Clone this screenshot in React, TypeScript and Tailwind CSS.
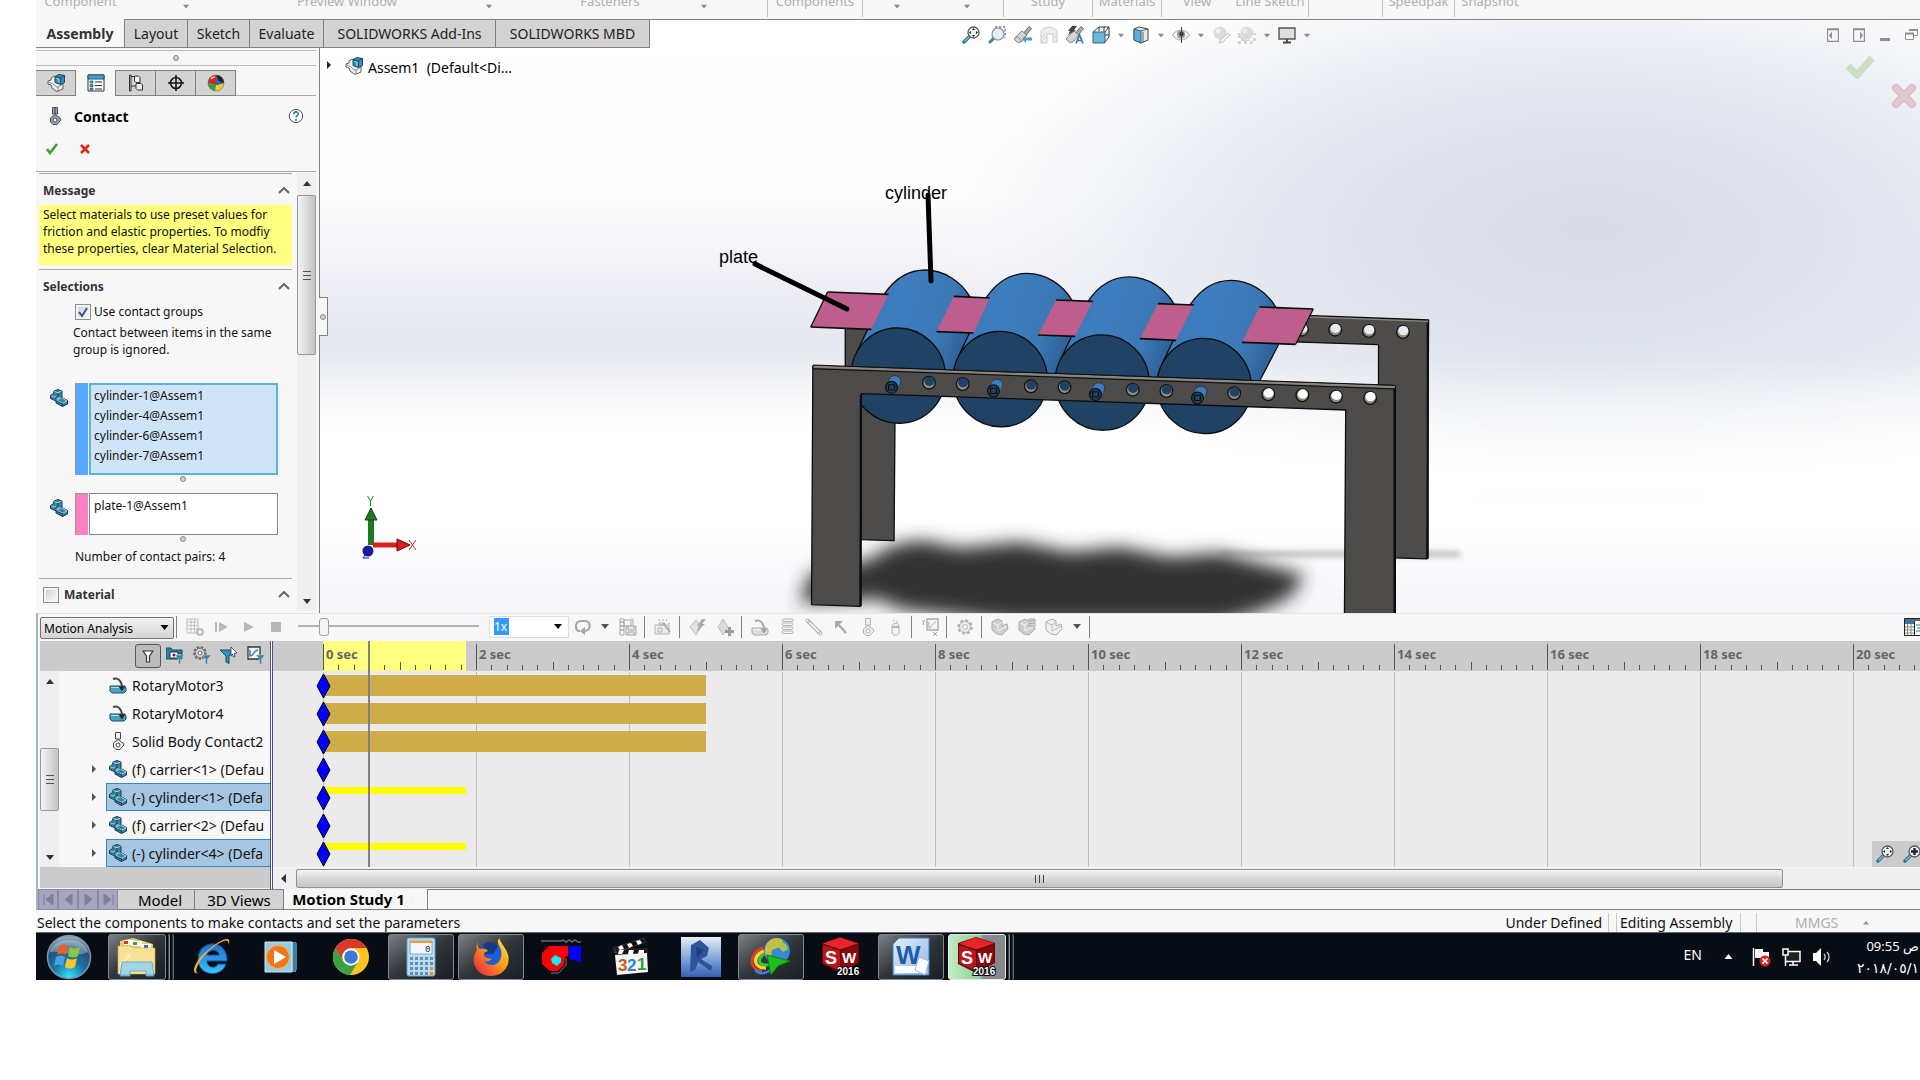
import type { ReactNode } from "react";
import clsx from "clsx";

function Svg({
  size = 18,
  className,
  children,
}: {
  size?: number;
  className?: string;
  children: ReactNode;
}) {
  return (
    <svg
      width={size}
      height={size}
      viewBox="0 0 18 18"
      fill="none"
      className={clsx("shrink-0", className)}
      aria-hidden="true"
    >
      {children}
    </svg>
  );
}

function Arrow({ className }: { className?: string }) {
  return (
    <svg width="8" height="5" viewBox="0 0 8 5" className={clsx("shrink-0", className)}>
      <path d="M0 0h8L4 5z" fill="currentColor" />
    </svg>
  );
}

function Dot() {
  return (
    <span className="block size-[6px] shrink-0 rounded-full border border-[#8c8c8c] bg-[#d0d0d0]" />
  );
}

/* ---------- icons ---------- */

function AssemblyIcon() {
  return (
    <Svg>
      <path d="M7 2 4 4v2L1 7v3l3 1 1 3 5 3.500 6-2.500V9l-3-3z" fill="#eceeef" stroke="#5d6163" />
      <path d="M11 17V12M2 8l4 2 5 4M16 10l-5 3" stroke="#8d9193" />
      <path d="m8 2.500 4-2 5.500 1v7l-4 2L8 8.500z" fill="#3f8fb5" stroke="#124a66" />
      <path d="m8 2.500 5.500 1.500 4-2.500M13.500 4v6" stroke="#124a66" />
      <path d="m9.500 4.500 2.500.7v3.800" stroke="#a6dcf2" />
    </Svg>
  );
}

function PartIcon() {
  return (
    <Svg>
      <path
        d="M.5 6.500 3.500 4.500 4 2 8 .5l4 1.500v6.500l5.500 3v3.500l-5 2.500L6 14v-2L.5 9.500z"
        fill="#3c7f9e"
        stroke="#123f56"
      />
      <path d="m4.500 2.500 3.500 1.200L11.500 2M1.500 6.800l3 1.200 1.500-1M12 9l5 3-4.500 2.200L7 11.500" stroke="#a3d5e8" />
      <path d="M8 4v4l-3 2M12.500 14.500v3M6 12l6.500 3" stroke="#123f56" />
      <path d="m8 8 4 1-4 2.200L6 10z" fill="#7fbdd6" />
    </Svg>
  );
}

function MotorIcon({ muted }: { muted?: boolean }) {
  const body = muted ? "#dcdcdc" : "#4ba0c6";
  const line = muted ? "#aaaaaa" : "#174f6b";
  return (
    <Svg>
      <path d="M1 10h15l1 2v3l-2 2H3l-2-2z" fill={body} stroke={line} />
      <path d="M2 11.500h10" stroke={muted ? "#f4f4f4" : "#b5e0f2"} />
      <path d="M4 3c5-2 9 2 9 9" stroke={muted ? "#aaaaaa" : "#444444"} strokeWidth="2" />
      <path d="m9.500 10.500 3.500 5 3-5z" fill={muted ? "#a0a0a0" : "#222222"} />
    </Svg>
  );
}

function ContactIcon({ muted, steel }: { muted?: boolean; steel?: boolean }) {
  const line = muted ? "#b0b0b0" : "#4c4c4c";
  const fill = steel ? "#93a5bb" : "#eeeeee";
  return (
    <Svg>
      <path d="M6.500.5h5V7h-5z" fill={fill} stroke={line} />
      {steel && <path d="M9 1v6" stroke="#33404f" />}
      <path d="m9 7.500 5 3.500 1 2-2 2-2 2.500H7L4.500 15v-4z" fill={fill} stroke={line} />
      <circle cx="9" cy="13" r="2" fill="#fff" stroke={line} />
    </Svg>
  );
}

function PropertyIcon() {
  return (
    <Svg>
      <path d="M1 1h16v16H1z" fill="#fff" stroke="#333" />
      <path d="M1 1h16v4H1z" fill="#4ba0c6" stroke="#1a5877" />
      <path d="M3 7h3v2H3zM3 10.500h3v2H3zM3 14h3v2H3z" fill="#4ba0c6" stroke="#1a5877" strokeWidth=".7" />
      <path d="M8 8h7M8 11.500h7M8 15h7" stroke="#333" strokeWidth="1.200" />
    </Svg>
  );
}

function ConfigIcon() {
  return (
    <Svg>
      <path d="M2.500 1v16H4V1zM4 2.500h4M4 12h5" stroke="#333" />
      <path d="M7.500 2h4l1.500 1.500v5h-4L7.500 7zM9 9.500h5l1.500 1.500v5h-5L9 14.500z" fill="#f2f2f2" stroke="#333" />
    </Svg>
  );
}

function TargetIcon() {
  return (
    <Svg>
      <circle cx="9" cy="9" r="5.500" stroke="#1a1a1a" strokeWidth="1.600" />
      <path d="M9 1v16M1 9h16" stroke="#1a1a1a" strokeWidth="1.600" />
    </Svg>
  );
}

function AppearanceIcon() {
  return (
    <Svg>
      <circle cx="9" cy="9" r="8" fill="#f2d21f" />
      <path d="M9 1a8 8 0 0 0-8 8l8 2z" fill="#d3262b" />
      <path d="M1 9a8 8 0 0 0 7 8l1-6z" fill="#2fa04a" />
      <path d="M9 1a8 8 0 0 1 8 8l-8 2z" fill="#3a2622" />
      <path d="M9 1 17 9l-8 2z" fill="#2d62c4" />
      <path d="M9 1c5 0 8 4 8 8l-5-2z" fill="#2a1c18" />
      <path d="M4 5c1-2 3-2 4-2" stroke="#ffb8b0" strokeWidth="1.500" />
      <circle cx="9" cy="9" r="8" stroke="#666" strokeWidth=".6" />
    </Svg>
  );
}

function HelpIcon() {
  return (
    <Svg size={16}>
      <circle cx="9" cy="9" r="7.500" fill="#fff" stroke="#3a3a3a" />
      <path d="M6.500 7c0-3.500 5-3.500 5-.5 0 2-2.500 2-2.500 4.200" stroke="#2d7da3" strokeWidth="1.800" />
      <circle cx="9" cy="13.400" r="1.200" fill="#2d7da3" />
    </Svg>
  );
}

function ZoomFitIcon({ plus }: { plus?: boolean }) {
  return (
    <Svg>
      <path d="m2 16 6-6" stroke="#2c6d8e" strokeWidth="3.400" strokeLinecap="round" />
      <path d="m2.500 15.500 5-5" stroke="#7dbbd8" strokeWidth="1.400" />
      <circle cx="11.500" cy="6.500" r="5.500" fill="#e8eef1" stroke="#555" strokeWidth="1.300" />
      {plus ? (
        <path d="M11.500 3v7M8 6.500h7" stroke="#222" strokeWidth="2.400" />
      ) : (
        <path
          d="m11.500 2 1.500 2h-3zM11.500 11l1.500-2h-3zM7 6.500 9 5v3zM16 6.500 14 5v3z"
          fill="#222"
        />
      )}
    </Svg>
  );
}

function ZoomAreaIcon() {
  return (
    <Svg>
      <path d="M7 1h10v11" stroke="#444" strokeDasharray="2.500 1.500" />
      <path d="m2 16 5-5" stroke="#3f86a9" strokeWidth="3" strokeLinecap="round" />
      <circle cx="10" cy="8" r="6" fill="#e4edf4" stroke="#8d959a" strokeWidth="1.200" />
    </Svg>
  );
}

function PrevViewIcon() {
  return (
    <Svg>
      <path d="m15 .5 2.500 2-5.500 7-3-2z" fill="#aaa" stroke="#555" strokeWidth=".8" />
      <path d="m8 5 5 4-6 7c-3 1.500-6.500-1-6.500-4z" fill="#d4d4d4" stroke="#666" strokeWidth=".8" />
      <path d="M2 11c2 0 4 1 5 4" stroke="#777" strokeWidth=".8" />
      <path d="m8 13 4-4v2.500h6v3h-6V17z" fill="#4f9cc4" />
    </Svg>
  );
}

function SectionIcon() {
  return (
    <Svg>
      <path d="M1 5c3-5 13-5 16 0v11h-4V8H7v9H1z" fill="#eee" stroke="#ccc" />
      <path d="m1 12 5-5M1 16l6-6M13 13l4-4" stroke="#ccc" />
    </Svg>
  );
}

function AnnotationViewIcon() {
  return (
    <Svg>
      <path d="M6 0h5L8 4h2L2 9l2-4H2z" fill="#444" />
      <path d="m15 .5 2.500 2-5.500 7-3-2z" fill="#aaa" stroke="#555" strokeWidth=".8" />
      <path d="m8 5 5 4-6 7c-3 1.500-6.500-1-6.500-4z" fill="#d4d4d4" stroke="#666" strokeWidth=".8" />
      <path d="m10 17.500 3.500-8.500L17 17.500M11.500 14.500h4" stroke="#2f7fa8" strokeWidth="1.700" />
    </Svg>
  );
}

function ViewCubeIcon() {
  return (
    <Svg>
      <path d="M1 6 7 1h10v10l-4 5M12 1v10M7 1v4M13 6l4-5M8 9h9" stroke="#333" />
      <path d="M1 6h12v11H1z" fill="#6db6d6" stroke="#2b6684" />
    </Svg>
  );
}

function DisplayStyleIcon() {
  return (
    <Svg>
      <path d="m2 3 5-2 9 2v11l-7 3-7-3z" fill="#e8eaeb" stroke="#444" />
      <path d="M2 3 9 5v12l-7-3z" fill="#5fb0d4" stroke="#2b6684" />
      <path d="m9 5 7-2M11 6v10" stroke="#444" strokeWidth=".8" />
    </Svg>
  );
}

function EyeIcon() {
  return (
    <Svg>
      <path d="M.5 9C4 2.500 14 2.500 17.500 9 14 15.500 4 15.500.5 9z" fill="#f0f0f0" stroke="#a8a8a8" />
      <circle cx="9" cy="8.500" r="4" fill="#9a9a9a" />
      <circle cx="9.500" cy="8" r="2.200" fill="#333" />
      <path d="M9.500 1v16" stroke="#444" />
    </Svg>
  );
}

function EditAppearanceIcon() {
  return (
    <Svg>
      <circle cx="8" cy="7" r="6.500" fill="#dcdcdc" />
      <circle cx="6" cy="5" r="2.500" fill="#efefef" />
      <path d="m16 7 2 2-7 7-4 1 1-3z" fill="#f2f2f2" stroke="#c0c0c0" />
    </Svg>
  );
}

function SceneIcon() {
  return (
    <Svg>
      <path d="M0 7h18v11H0z" fill="#d2d2d2" />
      <path d="M0 12h3v3H0zM3 15h3v3H3zM9 15h3v3H9zM12 12h3v3h-3zM15 15h3v3h-3zM15 9h3v3h-3z" fill="#fff" />
      <circle cx="9" cy="7" r="6.500" fill="#dadada" stroke="#eee" />
      <circle cx="7" cy="5" r="2.500" fill="#eee" />
    </Svg>
  );
}

function MonitorIcon() {
  return (
    <Svg>
      <path d="M1 2h16v11H1z" fill="#dedede" stroke="#555" strokeWidth="1.400" />
      <path d="M9 13v3M5 16.500h8" stroke="#444" strokeWidth="1.800" />
    </Svg>
  );
}

function CalcGridIcon() {
  return (
    <Svg>
      <path d="M1 1h11v14H1zM1 4h11M1 7.500h11M1 11h11M5 1v14M8.500 1v14" stroke="#c0c0c0" />
      <circle cx="14" cy="14" r="3" fill="#eee" stroke="#b0b0b0" strokeWidth="1.600" />
    </Svg>
  );
}

function LoopIcon() {
  return (
    <Svg>
      <path d="M6 13H4c-3-2-3-9 2-10h5c5 0 6 6 3 9l-3 1" stroke="#a8a8a8" strokeWidth="2" />
      <path d="m6 13 5-4v8z" fill="#a8a8a8" />
    </Svg>
  );
}

function FilmSaveIcon() {
  return (
    <Svg>
      <path d="M1 1h4v16H1zM5 2h7v6H5zM12 1h2v7" stroke="#aaa" />
      <path d="M1 4h4M1 8h4M1 12h4" stroke="#aaa" strokeWidth="1.500" />
      <path d="M7 8h10v9H7z" fill="#e8e8e8" stroke="#aaa" />
      <path d="M9 8v4h6V8M9 17v-3h6v3" stroke="#aaa" />
    </Svg>
  );
}

function WizardIcon() {
  return (
    <Svg>
      <path d="M1 7h14v9H1z" fill="#ececec" stroke="#b5b5b5" />
      <path d="M5 5h6v2H5zM4 10h4v4H4z" stroke="#b0b0b0" />
      <path d="m9 5 7 9" stroke="#aaa" strokeWidth="1.800" />
      <path d="m5 1 1 2M9 1v2M13 1l-1 2M16 5l-2 1" stroke="#aaa" />
    </Svg>
  );
}

function AutoKeyIcon() {
  return (
    <Svg>
      <path d="m7 2 5 7-5 8-6-8z" fill="#e2e2e2" stroke="#bcbcbc" />
      <path d="M13 1h4l-4 5h3l-9 8 3-6H8z" fill="#a9a9a9" />
    </Svg>
  );
}

function AddKeyIcon() {
  return (
    <Svg>
      <path d="m7 1 5 8-5 8-5-8z" fill="#dcdcdc" stroke="#bcbcbc" />
      <path d="M13.500 9v9M9 13.500h9" stroke="#9c9c9c" strokeWidth="3" />
    </Svg>
  );
}

function SpringIcon() {
  return (
    <Svg>
      {[1, 5, 9, 13].map((y) => (
        <rect key={y} x="4" y={y} width="11" height="2.500" rx="1.200" fill="#f4f4f4" stroke="#b4b4b4" />
      ))}
    </Svg>
  );
}

function DamperIcon() {
  return (
    <Svg>
      <path d="m3 3 12 12" stroke="#adadad" strokeWidth="4" strokeLinecap="round" />
      <path d="m4 4 11 11" stroke="#f2f2f2" strokeWidth="2" />
      <circle cx="2.500" cy="2.500" r="1.500" fill="#fff" stroke="#aaa" />
      <circle cx="15.500" cy="15.500" r="1.500" fill="#fff" stroke="#aaa" />
    </Svg>
  );
}

function ForceIcon() {
  return (
    <Svg>
      <path d="m5 5 9 10" stroke="#a9a9a9" strokeWidth="2.400" />
      <path d="M3 3h8l-8 8z" fill="#a9a9a9" />
    </Svg>
  );
}

function GravityIcon() {
  return (
    <Svg>
      <path d="M8 1v3M11 2v3" stroke="#c8c8c8" />
      <path d="M6 7c2-2 6-2 7 0v8c-1 3-6 3-7 0z" fill="#f2f2f2" stroke="#b5b5b5" />
      <path d="M6 8h7v2H6z" fill="#b5b5b5" />
    </Svg>
  );
}

function PlotIcon() {
  return (
    <Svg>
      <path d="M6 1h11v11H6z" fill="#f4f4f4" stroke="#aaa" strokeWidth="1.300" />
      <path d="M8 4v6c3 0 3-5 7-6M1 2l1.500 2L4 2M2.500 4v3M12 14l4 4M16 14l-4 4" stroke="#aaa" />
    </Svg>
  );
}

function GearIcon() {
  return (
    <Svg>
      <circle cx="9" cy="9" r="6.500" stroke="#b2b2b2" strokeWidth="2.400" strokeDasharray="3 2" />
      <circle cx="9" cy="9" r="5.500" fill="#eee" stroke="#b2b2b2" />
      <circle cx="9" cy="9" r="2.500" fill="#fff" stroke="#b2b2b2" />
    </Svg>
  );
}

function SimIcon({ light, grid }: { light?: boolean; grid?: boolean }) {
  return (
    <Svg>
      <path
        d="m1 4 6-3 4 2v5l5-2 1 5-6 6-5-1-5-4z"
        fill={light ? "#efefef" : "#cfcfcf"}
        stroke="#ababab"
      />
      <path d="m2 5 5 2v6M7 7l4-3M7 13l9-5" stroke={light ? "#bbb" : "#f5f5f5"} />
      {grid && <path d="M11 1h6v7h-6zM13 1v7M15 1v7M11 3h6M11 5.500h6" fill="#fff" stroke="#aaa" />}
    </Svg>
  );
}

/* filter strip above the tree */
const funnel = "M9 9h9l-3.500 4v5h-2v-5z";

function FilterAnimatedIcon() {
  return (
    <Svg>
      <path d="M0 2h5l1 2h10v9H0z" fill="#2c7fa6" stroke="#174f6b" />
      <path d="M4 6h8v6H4zM12 8l3-1v5l-3-1" fill="#fff" stroke="#333" />
      <circle cx="8" cy="9" r="1.500" fill="#333" />
      <path d={funnel} fill="#2c86b0" stroke="#cbcbcb" strokeWidth=".6" />
    </Svg>
  );
}

function FilterDrivingIcon() {
  return (
    <Svg>
      <circle cx="7" cy="7" r="5.800" stroke="#666" strokeWidth="2" strokeDasharray="2.500 1.400" />
      <circle cx="7" cy="7" r="4.500" fill="#ddd" stroke="#777" />
      <circle cx="7" cy="7" r="2" fill="#fff" stroke="#666" />
      <path d={funnel} fill="#2c86b0" stroke="#cbcbcb" strokeWidth=".6" />
    </Svg>
  );
}

function FilterSelectedIcon() {
  return (
    <Svg>
      <path d="M0 4h14l-5 6v7.500L6 16v-6z" fill="#3291bd" stroke="#17506c" />
      <path d="m11 1 6 6-3 .5 1 3-1.500.5-1-3L11 10z" fill="#fff" stroke="#333" strokeWidth=".8" />
    </Svg>
  );
}

function FilterResultsIcon() {
  return (
    <Svg>
      <path d="M1 1h12v12H1z" fill="#f5f5f5" stroke="#333" strokeWidth="1.300" />
      <path d="M3 4v6c5 0 2-5 8-6" stroke="#2c7fa6" strokeWidth="1.400" />
      <path d={funnel} fill="#2c86b0" stroke="#cbcbcb" strokeWidth=".6" />
    </Svg>
  );
}

/* ---------- ribbon ---------- */

function RibbonLabel({ children, className }: { children: ReactNode; className: string }) {
  return (
    <div className={clsx("flex h-[17px] justify-center border-[#c0c0c0]", className)}>
      <span className="-mt-[9px] text-[13px] leading-[20px] whitespace-nowrap text-[#b0b0b0]">
        {children}
      </span>
    </div>
  );
}

function RibbonArrow({ className }: { className: string }) {
  return (
    <div className={clsx("flex h-[17px] items-start justify-center border-[#c0c0c0] pt-1", className)}>
      <Arrow className="w-[6px] text-[#888]" />
    </div>
  );
}

function Ribbon() {
  return (
    <div className="flex h-[19px] overflow-hidden bg-[#f7f7f7]">
      <RibbonLabel className="w-[89px]">Component</RibbonLabel>
      <RibbonArrow className="w-[121px]" />
      <RibbonLabel className="w-[202px]">Preview Window</RibbonLabel>
      <RibbonArrow className="w-[82px]" />
      <RibbonLabel className="w-[160px]">Fasteners</RibbonLabel>
      <RibbonArrow className="w-[28px]" />
      <div className="h-[17px] w-[50px] border-r border-[#c0c0c0]" />
      <RibbonLabel className="w-[95px] border-r">Components</RibbonLabel>
      <RibbonArrow className="w-[68px]" />
      <RibbonArrow className="w-[73px] border-r" />
      <RibbonLabel className="w-[89px] border-r">Study</RibbonLabel>
      <RibbonLabel className="w-[69px] border-r">Materials</RibbonLabel>
      <RibbonLabel className="w-[70px]">View</RibbonLabel>
      <RibbonLabel className="w-[77px] border-r">Line Sketch</RibbonLabel>
      <div className="h-[17px] w-[74px] border-r border-[#c0c0c0]" />
      <RibbonLabel className="w-[72px] border-r">Speedpak</RibbonLabel>
      <RibbonLabel className="w-[70px]">Snapshot</RibbonLabel>
    </div>
  );
}

const commandTabs = [
  { label: "Layout", width: "w-[63px]" },
  { label: "Sketch", width: "w-[62px]" },
  { label: "Evaluate", width: "w-[74px]" },
  { label: "SOLIDWORKS Add-Ins", width: "w-[172px]" },
  { label: "SOLIDWORKS MBD", width: "w-[154px]" },
];

function CommandTabs() {
  return (
    <div role="tablist" className="flex text-[14px] text-[#222]">
      <button
        role="tab"
        aria-selected="true"
        className="w-[89px] border-r border-b border-[#808080] bg-[#f7f7f7] font-bold text-[#333]"
      >
        Assembly
      </button>
      {commandTabs.map((tab) => (
        <button
          key={tab.label}
          role="tab"
          className={clsx(
            "border-t border-r border-b border-[#808080] bg-[#d3d3d3] whitespace-nowrap",
            tab.width
          )}
        >
          {tab.label}
        </button>
      ))}
    </div>
  );
}

function HudButton({ children, label }: { children: ReactNode; label: string }) {
  return (
    <button aria-label={label} className="flex w-[26px] items-center justify-center">
      {children}
    </button>
  );
}

function HudArrow() {
  return (
    <button aria-label="More" className="flex w-[14px] items-center justify-center text-[#888]">
      <Arrow className="w-[6px]" />
    </button>
  );
}

function HeadsUpToolbar() {
  return (
    <div className="flex h-[30px] w-[664px] shrink-0 items-center justify-center">
      <HudButton label="Zoom to Fit"><ZoomFitIcon /></HudButton>
      <HudButton label="Zoom to Area"><ZoomAreaIcon /></HudButton>
      <HudButton label="Previous View"><PrevViewIcon /></HudButton>
      <HudButton label="Section View"><SectionIcon /></HudButton>
      <HudButton label="Dynamic Annotation Views"><AnnotationViewIcon /></HudButton>
      <HudButton label="View Orientation"><ViewCubeIcon /></HudButton>
      <HudArrow />
      <HudButton label="Display Style"><DisplayStyleIcon /></HudButton>
      <HudArrow />
      <HudButton label="Hide/Show Items"><EyeIcon /></HudButton>
      <HudArrow />
      <HudButton label="Edit Appearance"><EditAppearanceIcon /></HudButton>
      <HudButton label="Apply Scene"><SceneIcon /></HudButton>
      <HudArrow />
      <HudButton label="View Settings"><MonitorIcon /></HudButton>
      <HudArrow />
    </div>
  );
}

function WindowButtons() {
  return (
    <div className="ml-auto flex items-center gap-[14px] pt-px pr-[2px] text-[#909090]">
      <button aria-label="Expand left pane">
        <svg width="12" height="14" fill="none">
          <path d="M.5 1.500h11v12H.5zM0 1h12" stroke="currentColor" strokeWidth="1.400" />
          <path d="m2 7.500 3-4v8z" fill="currentColor" />
        </svg>
      </button>
      <button aria-label="Expand right pane">
        <svg width="12" height="14" fill="none">
          <path d="M.5 1.500h11v12H.5zM0 1h12" stroke="currentColor" strokeWidth="1.400" />
          <path d="m10 7.500-3-4v8z" fill="currentColor" />
        </svg>
      </button>
      <button aria-label="Minimize">
        <svg width="12" height="14">
          <path d="M1 10h10v3H1z" fill="currentColor" />
        </svg>
      </button>
      <button aria-label="Restore">
        <svg width="13" height="14" fill="none">
          <path d="M4.500 3V1.500h8v6H9M.5 5.500h8v6h-8z" stroke="currentColor" />
          <path d="M4 1h9v2H4zM0 4.500h9v2H0z" fill="currentColor" />
        </svg>
      </button>
    </div>
  );
}

/* ---------- property manager ---------- */

const managerTabs = [
  { label: "FeatureManager", icon: <AssemblyIcon /> },
  { label: "PropertyManager", icon: <PropertyIcon />, active: true },
  { label: "ConfigurationManager", icon: <ConfigIcon /> },
  { label: "DimXpertManager", icon: <TargetIcon /> },
  { label: "DisplayManager", icon: <AppearanceIcon /> },
];

function Chevron() {
  return (
    <svg width="12" height="7" fill="none">
      <path d="m1 6 5-5 5 5" stroke="#666" strokeWidth="2" />
    </svg>
  );
}

function CheckBox({ id, checked }: { id: string; checked?: boolean }) {
  return (
    <span className="relative size-4 shrink-0">
      <input
        id={id}
        type="checkbox"
        defaultChecked={checked}
        className="peer block size-4 appearance-none border border-[#8e8f8f] bg-linear-to-br from-[#c6cbd3] to-white shadow-[inset_0_0_0_2px_#f4f4f4]"
      />
      <svg
        width="16"
        height="16"
        fill="none"
        className="pointer-events-none absolute inset-0 hidden peer-checked:block"
      >
        <path d="m4 8 3 4 5-8" stroke="#3b4f9b" strokeWidth="2" />
      </svg>
    </span>
  );
}

function SectionTitle({ children }: { children: ReactNode }) {
  return (
    <button className="flex h-8 w-full items-center justify-between border-t border-[#a9a9a9] pt-[2px] pr-[2px] pl-1 text-[12px] font-bold text-[#333]">
      <span>{children}</span>
      <Chevron />
    </button>
  );
}

function SelectionBox({
  label,
  items,
  focused,
}: {
  label: string;
  items: string[];
  focused?: boolean;
}) {
  return (
    <div className="flex gap-[7px] pl-[11px]">
      <div className="pt-[6px]">
        <PartIcon />
      </div>
      <div className="flex gap-px">
        <span
          className={clsx(
            "w-[13px] border-t border-l border-[#999]",
            focused ? "bg-[#57a8ff]" : "bg-[#ff80c0]"
          )}
        />
        <ul
          aria-label={label}
          className={clsx(
            "w-[189px] leading-5",
            focused
              ? "h-[92px] border-2 border-[#5cb1e3] bg-[#cfe4f7] pt-px pl-[3px]"
              : "h-[42px] border border-[#8088a0] bg-white pt-[2px] pl-1"
          )}
        >
          {items.map((item) => (
            <li key={item}>{item}</li>
          ))}
        </ul>
      </div>
    </div>
  );
}

function VScroll({ thumb, className }: { thumb: string; className: string }) {
  return (
    <div className={clsx("flex shrink-0 flex-col items-center bg-[#efefef]", className)}>
      <button aria-label="Scroll up" className="flex h-5 items-center">
        <Arrow className="rotate-180 text-[#333]" />
      </button>
      <div className="min-h-0 w-full flex-1">
        <div
          className={clsx(
            "flex w-full flex-col items-center justify-center gap-[3px] rounded-[2px] border border-[#979797] bg-linear-to-r from-[#f4f4f4] via-[#dcdcde] to-[#c4c4c7]",
            thumb
          )}
        >
          <i className="h-px w-2 bg-[#555]" />
          <i className="h-px w-2 bg-[#555]" />
          <i className="h-px w-2 bg-[#555]" />
        </div>
      </div>
      <button aria-label="Scroll down" className="flex h-5 items-center">
        <Arrow className="text-[#333]" />
      </button>
    </div>
  );
}

function PropertyManager() {
  return (
    <aside className="flex w-[283px] shrink-0 flex-col bg-[#f7f7f7] pr-[3px] text-[12px] leading-[17px] text-[#111]">
      <div className="mt-[2px] flex h-4 items-center justify-center border-y border-[#bcbcbc]">
        <Dot />
      </div>
      <div role="tablist" className="mt-1 flex h-[26px]">
        {managerTabs.map((tab) => (
          <button
            key={tab.label}
            role="tab"
            aria-label={tab.label}
            aria-selected={!!tab.active}
            className={clsx(
              "flex w-10 items-center justify-center border-r border-[#808080]",
              tab.active ? "bg-[#f7f7f7]" : "border-y bg-[#d3d3d3]"
            )}
          >
            {tab.icon}
          </button>
        ))}
        <div className="flex-1 border-b border-[#a9a9a9]" />
      </div>
      <div className="flex h-10 items-center pr-[12px] pl-[10px]">
        <ContactIcon steel />
        <h2 className="ml-[10px] flex-1 text-[14px] font-bold text-black">Contact</h2>
        <button aria-label="Help">
          <HelpIcon />
        </button>
      </div>
      <div className="flex h-9 items-start gap-[22px] border-b border-[#a9a9a9] pt-[7px] pl-[10px]">
        <button aria-label="OK">
          <svg width="12" height="12" fill="none">
            <path d="m1 6 3 4 7-9" stroke="#3fa127" strokeWidth="2.600" />
          </svg>
        </button>
        <button aria-label="Cancel">
          <svg width="10" height="12" fill="none">
            <path d="m1 2 8 8M9 2l-8 8" stroke="#dc2b0c" strokeWidth="2.600" />
          </svg>
        </button>
      </div>
      <div className="flex min-h-0 flex-1 pt-px">
        <div className="mr-[5px] ml-[3px] min-w-0 flex-1">
          <SectionTitle>Message</SectionTitle>
          <p className="h-15 bg-[#ffff80] px-1 pt-px whitespace-nowrap">
            Select materials to use preset values for
            <br />
            friction and elastic properties. To modfiy
            <br />
            these properties, clear Material Selection.
          </p>
          <div className="mt-1">
            <SectionTitle>Selections</SectionTitle>
          </div>
          <div className="flex items-center gap-[3px] pt-[2px] pl-[36px]">
            <CheckBox id="groups" checked />
            <label htmlFor="groups">Use contact groups</label>
          </div>
          <p className="h-[63px] pt-[4px] pl-[34px] whitespace-nowrap">
            Contact between items in the same
            <br />
            group is ignored.
          </p>
          <SelectionBox
            label="Group 1"
            focused
            items={["cylinder-1@Assem1", "cylinder-4@Assem1", "cylinder-6@Assem1", "cylinder-7@Assem1"]}
          />
          <div className="flex h-[18px] items-start pt-px pl-[141px]">
            <Dot />
          </div>
          <SelectionBox label="Group 2" items={["plate-1@Assem1"]} />
          <div className="flex h-[12px] items-start pt-px pl-[141px]">
            <Dot />
          </div>
          <p className="h-[31px] pt-px pl-[36px]">Number of contact pairs: 4</p>
          <div className="flex items-center border-t border-[#a9a9a9] pr-[2px] pl-1">
            <CheckBox id="material" />
            <label htmlFor="material" className="ml-[5px] flex-1 py-[7px] text-[12px] font-bold text-[#333]">
              Material
            </label>
            <Chevron />
          </div>
        </div>
        <VScroll className="mb-[2px] w-[19px]" thumb="mt-[2px] h-[160px]" />
      </div>
    </aside>
  );
}

/* ---------- graphics area ---------- */

const rollers = [0, 1, 2, 3];
const plateParts = [
  "113,366 258,373 217,478 73,471",
  "413,379 498,384 460,489 372,485",
  "656,390 743,394 701,499 613,495",
  "898,401 983,405 941,511 855,506",
  "1139,411 1267,417 1225,523 1098,517",
];
const frontHoles = [
  [354, 638, 1],
  [434, 642, 1],
  [596, 649, 1],
  [676, 652, 1],
  [838, 659, 1],
  [918, 663, 1],
  [1079, 670, 1],
  [1160, 673, 0],
  [1241, 676, 0],
  [1321, 680, 0],
  [1402, 684, 0],
];
const backHoles = [
  [1240, 479],
  [1319, 479],
  [1399, 483],
  [1480, 486],
];

function Hole({ x, y, fill }: { x: number; y: number; fill: string }) {
  return (
    <g>
      <ellipse cx={x} cy={y} rx="15" ry="19" fill="#8f8b84" stroke="#111" vectorEffect="non-scaling-stroke" />
      <ellipse cx={x + 1} cy={y - 4} rx="12" ry="14" fill={fill} stroke="none" />
    </g>
  );
}

function ConveyorModel() {
  return (
    <g
      transform="translate(460 151) scale(.4209 .3333)"
      stroke="#0c0c0c"
      strokeWidth="1.300"
      strokeLinejoin="round"
    >
      {/* back frame */}
      <g fill="#4d4c4a">
        <path d="M155 470h120l-4 642-79-3V600h-37z" vectorEffect="non-scaling-stroke" />
        <path
          d="M1200 434 1541 450l-4 717-75-3-40-500V524l-222-9z"
          vectorEffect="non-scaling-stroke"
        />
        <path d="m1240 440 300 14" stroke="#8d8983" strokeWidth="4" />
        <path d="M1539 458v708" strokeWidth="5" />
      </g>
      {backHoles.map(([x, y]) => (
        <Hole key={x} x={x} y={y} fill="#e9ebf3" />
      ))}

      {/* rollers */}
      {rollers.map((i) => (
        <g key={i} transform={`translate(${i * 242.3} ${i * 10.4})`}>
          <path
            d="M183 545 248 372C275 322 310 300 345 300c45 0 85 35 106 80 12 25 14 70 6 114l-44 107-20 40H230z"
            fill="url(#roller)"
            vectorEffect="non-scaling-stroke"
          />
          <ellipse
            cx="281"
            cy="617"
            rx="112"
            ry="143"
            fill="#204264"
            transform="rotate(-2 281 617)"
            vectorEffect="non-scaling-stroke"
          />
        </g>
      ))}

      {/* plate */}
      {plateParts.map((points) => {
        const [a, b, c, d] = points.split(" ");
        return (
          <g key={points}>
            <polygon points={points} fill="#be5e8d" stroke="none" />
            <path d={`M${a} ${b}M${c} ${d}`} strokeWidth="5" />
          </g>
        );
      })}
      <path d="M113 366 73 471M1267 417l-42 106" strokeWidth="3" />

      {/* front frame */}
      <path
        d="M78 588 1462 648V1345H1341l3-625L193 671l-3 638-115-5z"
        fill="#4c4b49"
        vectorEffect="non-scaling-stroke"
      />
      <path d="m80 590 1381 61" stroke="#8a857f" strokeWidth="7" />
      <path d="m78 585 1384 61M78 596l1384 61" strokeWidth="3" />
      <path d="M1460 655v690M192 675v634" strokeWidth="5" />
      {frontHoles.map(([x, y, solid]) => (
        <Hole key={x} x={x} y={y} fill={solid ? "#204264" : "#ffffff"} />
      ))}
      {rollers.map((i) => (
        <g key={i} transform={`translate(${i * 242.3} ${i * 10.6})`}>
          <ellipse cx="273" cy="633" rx="14" ry="16" fill="#3d7cbd" />
          <path d="m252 648 12-26 22 10-7 28z" fill="#3d7cbd" stroke="none" />
          <ellipse cx="265" cy="652" rx="14" ry="18" fill="#204264" strokeWidth="3" />
          <path d="M258 644h14v16h-14z" strokeWidth="3" fill="none" />
        </g>
      ))}
    </g>
  );
}

function GraphicsArea() {
  return (
    <svg
      className="absolute top-0 left-[284px] h-full w-[1600px]"
      viewBox="0 0 1600 594"
      preserveAspectRatio="xMinYMin slice"
      fontFamily="Liberation Sans, sans-serif"
    >
      <defs>
        <linearGradient id="sky" x1="0" y1="0" x2="0" y2="1">
          <stop offset="0" stopColor="#ffffff" />
          <stop offset=".3" stopColor="#fdfdfe" />
          <stop offset=".45" stopColor="#eeeff5" />
          <stop offset=".54" stopColor="#e4e8f0" />
          <stop offset=".6" stopColor="#eceef2" />
          <stop offset=".7" stopColor="#ffffff" />
          <stop offset=".85" stopColor="#ffffff" />
          <stop offset="1" stopColor="#f5f6fa" />
        </linearGradient>
        <radialGradient
          id="haze"
          cx="0"
          cy="0"
          r="1"
          gradientUnits="userSpaceOnUse"
          gradientTransform="translate(1270 210) scale(660 300)"
        >
          <stop offset="0" stopColor="#d9dce8" />
          <stop offset=".35" stopColor="#dde1eb" stopOpacity=".95" />
          <stop offset=".65" stopColor="#e6eaf2" stopOpacity=".75" />
          <stop offset=".85" stopColor="#f1f2f6" stopOpacity=".4" />
          <stop offset="1" stopColor="#ffffff" stopOpacity="0" />
        </radialGradient>
        <linearGradient id="floor" x1="0" y1="0" x2="0" y2="1">
          <stop offset="0" stopColor="#ffffff" stopOpacity="0" />
          <stop offset=".6" stopColor="#ffffff" />
          <stop offset="1" stopColor="#ffffff" stopOpacity="0" />
        </linearGradient>
        <linearGradient id="roller" x1="0" y1="0" x2="1" y2=".3">
          <stop offset="0" stopColor="#3a74b0" />
          <stop offset=".4" stopColor="#3e7ebf" />
          <stop offset=".8" stopColor="#3b78b6" />
          <stop offset="1" stopColor="#2f639a" />
        </linearGradient>
        <filter id="soft" x="-20%" y="-50%" width="140%" height="200%">
          <feGaussianBlur stdDeviation="9" />
        </filter>
        <filter id="softLine" x="-20" y="-20" width="300" height="60" filterUnits="userSpaceOnUse">
          <feGaussianBlur stdDeviation="3" />
        </filter>
      </defs>
      <rect width="1600" height="594" fill="url(#sky)" />
      <rect width="1600" height="594" fill="url(#haze)" />
      <rect y="340" width="1600" height="200" fill="url(#floor)" />

      <g filter="url(#soft)">
        <path
          d="M552 540 568 528 600 521 640 529 700 523 750 533 800 528 850 538 900 534 945 546 985 556 970 578 940 592 900 604H700L580 590 560 580 480 584 490 555z"
          fill="#333"
        />
      </g>
      <g transform="translate(900 535)">
        <path d="M0 0h240" stroke="#777" strokeWidth="4" opacity=".7" filter="url(#softLine)" />
      </g>
      <ConveyorModel />

      {/* call-outs */}
      <g fontSize="18" fill="#000">
        <text x="565" y="180">cylinder</text>
        <text x="399" y="244">plate</text>
      </g>
      <path d="m608 176 3 86M435 245l92 45" stroke="#000" strokeWidth="5" strokeLinecap="round" />

      {/* triad */}
      <path d="M51 526v-28" stroke="#1e7a22" strokeWidth="6" />
      <path d="M51 489 45 501h12z" fill="#1e7a22" stroke="#0d4410" />
      <path d="M53 526h26" stroke="#d81e1e" strokeWidth="5" />
      <path d="m90 526-13-6v12z" fill="#d81e1e" stroke="#6e0808" />
      <circle cx="48" cy="532" r="5.500" fill="#1a1a8c" />
      <path d="M50.500 487v-5l-3-5m3 5 3-5" stroke="#0a8a0a" fill="none" />
      <path d="m89 521 7 10m0-10-7 10" stroke="#e02020" fill="none" />
      <path d="M43 530h6l-6 9h6" stroke="#1414e0" fill="none" />
    </svg>
  );
}

function Viewport() {
  return (
    <div className="relative min-w-0 flex-1 border-l border-[#808080]">
      <button
        aria-label="Collapse panel"
        className="absolute top-[249px] -left-px flex h-[39px] w-[9px] items-center justify-center border border-l-0 border-[#808080] bg-[#f7f7f7]"
      >
        <Dot />
      </button>
      <div className="flex items-start gap-[5px] pt-[9px] pl-[7px] text-[14px] leading-5">
        <svg width="5" height="8" className="mt-[4px] mr-[8px]">
          <path d="M0 0v8l4-4z" fill="#222" />
        </svg>
        <AssemblyIcon />
        <span className="pt-px whitespace-pre">Assem1  (Default&lt;Di...</span>
      </div>
      <div className="absolute top-[7px] right-[3px] flex w-[72px] justify-between">
        <button aria-label="Accept" className="self-start">
          <svg width="30" height="24" fill="none">
            <path d="m3 11 9 9L27 3" stroke="#c9e0c6" strokeWidth="7" />
          </svg>
        </button>
        <button aria-label="Reject" className="mt-[28px]">
          <svg width="26" height="26" fill="none">
            <path d="m5 5 16 16M21 5 5 21" stroke="#d9b5b9" strokeWidth="8" strokeLinecap="round" />
            <path d="m5 5 16 16M21 5 5 21" stroke="#e8c6c9" strokeWidth="6" strokeLinecap="round" />
          </svg>
        </button>
      </div>
    </div>
  );
}

/* ---------- motion study ---------- */

function Tool({ children, label }: { children: ReactNode; label: string }) {
  return (
    <button aria-label={label} className="flex w-[27px] shrink-0 items-center justify-center">
      {children}
    </button>
  );
}

function Divider() {
  return (
    <span className="flex w-2 shrink-0 pl-[3px]">
      <i className="h-[22px] w-px bg-[#808080]" />
    </span>
  );
}

function MotionToolbar() {
  return (
    <div className="flex h-[28px] items-center border-t border-[#e4e4ee] bg-[#f7f7f7] pb-[2px] pl-[2px] text-[#aaa]">
      <span className="relative flex items-center pt-[2px]">
        <select
          aria-label="Type of study"
          defaultValue="ma"
          className="h-[22px] w-[134px] appearance-none rounded-[2px] border border-[#707070] bg-linear-to-b from-[#f2f2f2] to-[#d4d4d4] pt-[2px] pl-[3px] text-[12px] text-black"
        >
          <option value="ma">Motion Analysis</option>
        </select>
        <Arrow className="pointer-events-none absolute right-[5px] w-[9px] text-black" />
      </span>
      <i className="ml-[2px] h-[22px] w-px bg-[#808080]" />
      <span className="flex pl-[4px]">
        <Tool label="Calculate"><CalcGridIcon /></Tool>
        <Tool label="Play from Start">
          <svg width="14" height="12"><path d="M0 1h2v10H0zM4 1v10l9-5z" fill="#b8b8b8" /></svg>
        </Tool>
        <Tool label="Play">
          <svg width="10" height="12"><path d="M0 1v10l10-5z" fill="#b8b8b8" /></svg>
        </Tool>
        <Tool label="Stop">
          <svg width="10" height="10"><path d="M0 0h10v10H0z" fill="#b8b8b8" /></svg>
        </Tool>
      </span>
      <input
        type="range"
        aria-label="Time"
        defaultValue={12}
        className="ml-[9px] h-5 w-[181px] appearance-none bg-transparent [&::-webkit-slider-runnable-track]:h-[3px] [&::-webkit-slider-runnable-track]:border-t-2 [&::-webkit-slider-runnable-track]:border-[#b0b4b4] [&::-webkit-slider-thumb]:-mt-[9px] [&::-webkit-slider-thumb]:h-[18px] [&::-webkit-slider-thumb]:w-[10px] [&::-webkit-slider-thumb]:appearance-none [&::-webkit-slider-thumb]:rounded-[3px] [&::-webkit-slider-thumb]:border [&::-webkit-slider-thumb]:border-[#a0a0a0] [&::-webkit-slider-thumb]:bg-[#f4f4f4]"
      />
      <span className="ml-[10px] flex h-[22px] w-[80px] items-center justify-between border border-[#dcdce4] bg-white pr-[5px] pl-[4px]">
        <input
          aria-label="Playback speed"
          defaultValue="1x"
          className="h-[17px] w-[15px] bg-[#3399ff] text-[12px] text-white"
        />
        <button aria-label="Speeds">
          <Arrow className="w-[10px] text-black" />
        </button>
      </span>
      <Tool label="Playback mode"><LoopIcon /></Tool>
      <button aria-label="Modes" className="flex w-[18px] justify-center text-[#555]">
        <Arrow />
      </button>
      <Tool label="Save Animation"><FilmSaveIcon /></Tool>
      <Divider />
      <Tool label="Animation Wizard"><WizardIcon /></Tool>
      <Divider />
      <Tool label="Autokey"><AutoKeyIcon /></Tool>
      <Tool label="Add Key"><AddKeyIcon /></Tool>
      <Divider />
      <Tool label="Motor"><MotorIcon muted /></Tool>
      <Tool label="Spring"><SpringIcon /></Tool>
      <Tool label="Damper"><DamperIcon /></Tool>
      <Tool label="Force"><ForceIcon /></Tool>
      <Tool label="Contact"><ContactIcon muted /></Tool>
      <Tool label="Gravity"><GravityIcon /></Tool>
      <Divider />
      <Tool label="Results and Plots"><PlotIcon /></Tool>
      <Divider />
      <Tool label="Motion Study Properties"><GearIcon /></Tool>
      <Divider />
      <Tool label="Simulation Setup"><SimIcon /></Tool>
      <Tool label="Calculate Simulation"><SimIcon grid /></Tool>
      <Tool label="Stress Plot"><SimIcon light /></Tool>
      <button aria-label="Plots" className="flex w-[19px] justify-center text-[#555]">
        <Arrow />
      </button>
      <Divider />
      <button aria-label="Collapse MotionManager" className="ml-auto w-4 overflow-hidden">
        <svg width="16" height="18" fill="none">
          <path d="M.5.500h20v17H.5z" fill="#fff" stroke="#222" />
          <path d="M1 1h18v2H1z" fill="#666" />
          <path d="M1 3h10v3H1z" fill="#2c7fa6" />
          <path d="M1 9h9M1 12h9M1 15h9M3.500 6v11M7 6v11" stroke="#888" />
          <path d="M10.500 3v15" stroke="#222" />
          <path d="M12 7h4M13 10h3M12 13h4" stroke="#2c7fa6" />
        </svg>
      </button>
    </div>
  );
}

type Row = {
  label: string;
  kind: "motor" | "contact" | "part";
  selected?: boolean;
  bar?: "full" | "thin";
};

const rows: Row[] = [
  { label: "RotaryMotor3", kind: "motor", bar: "full" },
  { label: "RotaryMotor4", kind: "motor", bar: "full" },
  { label: "Solid Body Contact2", kind: "contact", bar: "full" },
  { label: "(f) carrier<1> (Defau", kind: "part" },
  { label: "(-) cylinder<1> (Defa", kind: "part", selected: true, bar: "thin" },
  { label: "(f) carrier<2> (Defau", kind: "part" },
  { label: "(-) cylinder<4> (Defa", kind: "part", selected: true, bar: "thin" },
];

function MotionTree() {
  return (
    <div className="flex w-[230px] shrink-0 flex-col overflow-hidden bg-[#f7f7f7]">
      <div className="flex h-[30px] items-center gap-[9px] bg-[#cbcbcb] pb-[2px] pl-[95px]">
        <button
          aria-label="No Filter"
          className="mt-[2px] flex h-[24px] w-[26px] shrink-0 items-center justify-center rounded-[3px] border border-[#555] bg-[#bcbcbc]"
        >
          <svg width="12" height="13" fill="none">
            <path d="M1 1h10L7.500 6v6h-3V6z" fill="#fff" stroke="#333" strokeWidth="1.200" />
          </svg>
        </button>
        <button aria-label="Filter Animated" className="-ml-1"><FilterAnimatedIcon /></button>
        <button aria-label="Filter Driving"><FilterDrivingIcon /></button>
        <button aria-label="Filter Selected"><FilterSelectedIcon /></button>
        <button aria-label="Filter Results"><FilterResultsIcon /></button>
      </div>
      <div className="flex h-[196px]">
        <VScroll className="w-[19px]" thumb="mt-[57px] h-[63px]" />
        <ul className="min-w-0 flex-1 overflow-hidden text-[14px] text-[#111]">
          {rows.map((row) => (
            <li key={row.label} className="flex h-7 items-center">
              <span className="flex w-[47px] shrink-0 justify-end pr-[9px]">
                {row.kind === "part" && (
                  <svg width="5" height="8">
                    <path d="M0 0v8l4-4z" fill="#555" />
                  </svg>
                )}
              </span>
              <span
                className={clsx(
                  "flex h-7 w-[180px] shrink-0 items-center gap-[5px] border pl-[2px] whitespace-nowrap",
                  row.selected ? "border-[#3a86b4] bg-[#a6c6e2]" : "border-transparent"
                )}
              >
                {row.kind === "motor" && <MotorIcon />}
                {row.kind === "contact" && <ContactIcon />}
                {row.kind === "part" && <PartIcon />}
                <span>{row.label}</span>
              </span>
            </li>
          ))}
        </ul>
      </div>
      <div className="h-[22px] border-b border-[#f7f7f7] bg-[#cbcbcb]" />
    </div>
  );
}

const SECOND = 76.5;
const marks = [0, 2, 4, 6, 8, 10, 12, 14, 16, 18, 20];

function Ruler() {
  return (
    <div className="relative flex h-[30px] overflow-hidden bg-[#cbcbcb] pl-[50px] text-[13px] font-bold text-[#666]">
      <div className="absolute top-0 left-[50px] h-full bg-[#ffff80]" style={{ width: 1.87 * SECOND }} />
      {marks.map((mark) => (
        <div key={mark} className="relative h-[29px] w-[153px] shrink-0">
          <div className="grid h-full grid-cols-10 items-end">
            {Array.from({ length: 10 }, (_, i) => (
              <i
                key={i}
                className={clsx(
                  "w-px bg-[#555]",
                  i === 0 ? "h-[26px]" : i === 5 ? "h-[8px]" : "h-[5px]"
                )}
              />
            ))}
          </div>
          <span className="absolute top-[3px] left-[3px] leading-5 whitespace-nowrap">{mark} sec</span>
        </div>
      ))}
    </div>
  );
}

function Timeline() {
  return (
    <div className="flex min-w-0 flex-1 flex-col">
      <div className="relative">
        <Ruler />
        <div className="relative h-[196px] overflow-hidden bg-[#ebebeb]">
          <div className="absolute inset-0 flex pt-px pl-[50px]">
            {marks.map((mark) => (
              <i key={mark} className="w-[153px] shrink-0 border-l border-[#bdbdbd]" />
            ))}
          </div>
          {rows.map((row) => (
            <div key={row.label} className="relative h-7 pt-1 pl-[50px]">
              {row.bar === "full" && (
                <div className="h-[21px] bg-[#ceac4a]" style={{ width: 5 * SECOND }} />
              )}
              {row.bar === "thin" && (
                <div className="h-[7px] bg-[#ffff00]" style={{ width: 1.87 * SECOND }} />
              )}
              <svg width="15" height="26" className="absolute top-[2px] left-[43px]">
                <path d="M7.500 1 14 13 7.500 25 1 13z" fill="#0000ff" stroke="#000" />
              </svg>
            </div>
          ))}
          <div className="absolute right-0 bottom-0 flex h-[26px] w-[48px] items-center gap-[9px] overflow-hidden bg-[#cbcbcb] pl-[4px]">
            <button aria-label="Zoom to Fit"><ZoomFitIcon /></button>
            <button aria-label="Zoom In"><ZoomFitIcon plus /></button>
          </div>
        </div>
        <div className="absolute top-0 bottom-0 left-[95px] w-[2px] bg-[#808080]" />
      </div>
      <div className="flex h-[22px] items-center border-t border-[#f7f7f7] bg-[#efefef]">
        <button aria-label="Scroll left" className="flex w-[23px] justify-center pr-[2px]">
          <svg width="5" height="9">
            <path d="M5 0v9L0 4.500z" fill="#333" />
          </svg>
        </button>
        <div className="mr-[137px] flex h-[19px] flex-1 items-center justify-center gap-[3px] rounded-[2px] border border-[#8f8f8f] bg-linear-to-b from-[#f4f4f4] via-[#d8d8da] to-[#c4c4c7]">
          <i className="h-2 w-px bg-[#444]" />
          <i className="h-2 w-px bg-[#444]" />
          <i className="h-2 w-px bg-[#444]" />
        </div>
      </div>
    </div>
  );
}

const navGlyphs = ["M3 2v11M12 2v11L5 7.500z", "M11 2v11L4 7.500z", "M4 2v11l7-5.500z", "M12 2v11M3 2v11l7-5.500z"];

function StudyTabs() {
  return (
    <div role="tablist" className="flex h-[21px] text-[15px] leading-[18px]">
      {navGlyphs.map((d) => (
        <button
          key={d}
          aria-label="Scroll tabs"
          className="flex w-5 items-center justify-center border border-[#8a8aa6] bg-[#a5a5c0]"
        >
          <svg width="15" height="15">
            <path d={d} fill="#7f7f98" stroke="#7f7f98" />
          </svg>
        </button>
      ))}
      <button role="tab" className="w-[77px] border-t border-r border-b border-[#808080] bg-[#d3d3d3] pl-2">
        Model
      </button>
      <button role="tab" className="w-[89px] border-t border-r border-b border-[#808080] bg-[#d3d3d3]">
        3D Views
      </button>
      <button
        role="tab"
        aria-selected="true"
        className="w-[144px] border-r border-b border-[#808080] pr-[14px] font-bold whitespace-nowrap"
      >
        Motion Study 1
      </button>
      <div className="flex-1 border-y border-[#808080]" />
    </div>
  );
}

function StatusBar() {
  return (
    <footer className="flex h-[22px] items-center overflow-hidden pt-[3px] text-[14px] leading-[18px] text-[#111]">
      <p className="pl-px whitespace-nowrap">Select the components to make contacts and set the parameters</p>
      <div className="ml-auto flex items-center whitespace-nowrap">
        <span className="pr-[6px]">Under Defined</span>
        <span className="h-[19px] w-[9px] border-x border-[#c8c8c8]" />
        <span className="w-[123px] pl-[3px]">Editing Assembly</span>
        <span className="h-[19px] w-[17px] border-x border-[#c8c8c8]" />
        <span className="w-[106px] pl-[38px] text-[#b0b0b0]">MMGS</span>
        <Arrow className="mr-[51px] w-[6px] rotate-180 text-[#999]" />
      </div>
    </footer>
  );
}

/* ---------- taskbar ---------- */

function StartOrb() {
  return (
    <svg width="46" height="46" viewBox="0 0 46 46">
      <defs>
        <radialGradient id="orb" cx=".5" cy=".95" r=".9">
          <stop offset="0" stopColor="#2ee6ff" />
          <stop offset=".4" stopColor="#1b76a8" />
          <stop offset=".75" stopColor="#23517c" />
          <stop offset="1" stopColor="#8fa9bd" />
        </radialGradient>
      </defs>
      <circle cx="23" cy="23" r="21.500" fill="url(#orb)" stroke="#7e95a5" strokeWidth="1.500" />
      <path d="M4 18C8 2 38 2 42 18 30 24 16 16 4 18z" fill="#fff" opacity=".3" />
      <path d="M13 12c4-2 6-2 9 0l-2 9c-3-2-6-2-9 0z" fill="#e8612c" />
      <path d="M24 13c3 2 6 2 10 0l-2 9c-4 2-7 2-10 0z" fill="#8cc63e" />
      <path d="M10 23c4-2 6-2 9 0l-2 9c-3-2-6-2-9 0z" fill="#4aa3e0" />
      <path d="M21 24c3 2 6 2 10 0l-2 9c-4 2-7 2-10 0z" fill="#fcc52c" />
    </svg>
  );
}

function FolderIcon() {
  return (
    <svg width="42" height="42" viewBox="0 0 42 42">
      <path d="M4 5 17 2l20 6v28H4z" fill="#e9cf74" />
      <path d="M8 4h9v5H8zM16 5h10v5H16zM25 8h10v5H25z" fill="#fff" />
      <path d="M8 5h4v3H8z" fill="#d33" />
      <path d="M17 6h4v3h-4z" fill="#3a3" />
      <path d="M28 9h4v3h-4z" fill="#36c" />
      <path d="M2 10h12l3 2h22v26H2z" fill="#f6e196" stroke="#cfae4e" strokeWidth=".6" />
      <path d="m3 30 12-12M3 36l20-8" stroke="#fffbe0" strokeWidth="1.500" opacity=".7" />
      <path d="M6 26h30l2 14h-8v-5H14v5H4z" fill="#9bd3ee" stroke="#5ca6cd" opacity=".9" />
    </svg>
  );
}

function IeIcon() {
  return (
    <svg width="42" height="42" viewBox="0 0 42 42" fill="none">
      <defs>
        <linearGradient id="ie" x1="0" y1="0" x2="0" y2="1">
          <stop offset="0" stopColor="#1f6fd0" />
          <stop offset=".6" stopColor="#2f9be8" />
          <stop offset="1" stopColor="#3cc8f4" />
        </linearGradient>
      </defs>
      <path
        d="M37 25H17c0 7 9 8 11 3h8C32 42 8 41 8 23 8 3 38 2 37 25zM17 19h12c0-6-11-6-12 0z"
        fill="url(#ie)"
        stroke="#0d4e96"
      />
      <path d="M9 37c-10 3-4-13 9-23C30 4 43-2 38 9c2-9-8-3-17 4C9 23 2 38 9 37z" fill="#f2b422" />
    </svg>
  );
}

function MediaPlayerIcon() {
  return (
    <svg width="36" height="36" viewBox="0 0 36 36">
      <path d="M8 3h25v30l-25-2z" fill="#5da3c4" />
      <path d="m30 3 4 1v27l-4 2z" fill="#3d7f9f" />
      <path d="M2 3h27v30H2z" fill="#9ccbe0" stroke="#cdeaf5" />
      <circle cx="15" cy="18" r="11.500" fill="#f0761b" stroke="#fbb46d" />
      <path d="m11 11 12 7-12 7z" fill="#fff" />
    </svg>
  );
}

function ChromeIcon() {
  return (
    <svg width="38" height="38" viewBox="0 0 38 38">
      <circle cx="19" cy="19" r="18" fill="#fcc41c" />
      <path d="M3.400 10A18 18 0 0 1 34.600 10H19a9 9 0 0 0-8 13z" fill="#d9392c" />
      <path d="M3.400 10A18 18 0 0 0 18 37l8-13a9 9 0 0 1-15-1z" fill="#3aa148" />
      <circle cx="19" cy="19" r="8.500" fill="#fff" />
      <circle cx="19" cy="19" r="6.800" fill="#3c78d8" />
    </svg>
  );
}

function CalculatorIcon() {
  return (
    <svg width="30" height="40" viewBox="0 0 30 40">
      <rect x="1" y="1" width="28" height="38" rx="2" fill="#b9dcf1" stroke="#6ba3c8" />
      <path d="M4 4h22v13H4z" fill="#f4f8fb" stroke="#7ba8c8" />
      <path d="M4 5h22" stroke="#f49b2a" strokeWidth="2" />
      <text x="19" y="15" fontSize="9" fill="#223" fontFamily="Liberation Mono, monospace">0</text>
      {[20, 25, 30, 35].map((y) =>
        [4, 9, 14, 19, 24].map((x) => (
          <rect
            key={`${x}-${y}`}
            x={x}
            y={y}
            width="3"
            height="3"
            fill={x === 24 && y > 27 ? "#f08c1c" : "#5f8fb5"}
          />
        ))
      )}
    </svg>
  );
}

function FirefoxIcon() {
  return (
    <svg width="40" height="40" viewBox="0 0 40 40">
      <defs>
        <linearGradient id="fox" x1="1" y1="0" x2="0" y2="1">
          <stop offset="0" stopColor="#fff04a" />
          <stop offset=".45" stopColor="#ff9a1a" />
          <stop offset="1" stopColor="#e8174a" />
        </linearGradient>
      </defs>
      <circle cx="20" cy="19" r="13" fill="#1d5fd0" />
      <path d="M12 8c4-4 12-4 15 1l-5 8h-8z" fill="#173a86" />
      <path
        d="M7 5c-2 3-2 6-1 8-8 11-1 26 14 26 14 0 21-13 16-24-2-5-5-7-8-14-3 6 1 8 2 12 2 9-3 15-9 15-4 0-6-2-8-4 4 1 5 0 8-2-2-1-5 0-8-3-1-3 1-4 4-5-2-3-5-2-8-2-2-1-3-4-2-7z"
        fill="url(#fox)"
      />
    </svg>
  );
}

function TurbineIcon() {
  return (
    <svg width="40" height="36" viewBox="0 0 40 36">
      <path d="M0 2h20l2-1 3 2 3-2 3 2 3-2 3 2h3" stroke="#6a6a6a" strokeWidth="1.500" fill="none" />
      <path d="M8 7h19v10l-3 1-1 8-6 6H9l-8-7V14z" fill="#f00" />
      <path d="M10 34h8l7-8v-7" stroke="#777" fill="none" />
      <path d="M28 7h12v17l-12-5z" fill="#00f" />
      <path d="m10 20 4-4 6 3v4l-4 4-5-3z" fill="#1ee" />
    </svg>
  );
}

function ClapperIcon() {
  return (
    <svg width="40" height="40" viewBox="0 0 40 40">
      <path d="m2 11 31-10 2 4L4 16zM4 12h32v5L5 18z" fill="#111" stroke="#555" strokeWidth=".5" />
      <path d="m7 10 4-2 2 4-4 1zM16 7l4-1 2 3-4 2zM25 4l4-1 2 3-4 2zM8 13h5l-2 4H7zM18 13h5l-1 4h-5zM28 13h5v4h-6z" fill="#fff" />
      <path d="m4 18 32-2 1 19-31 3z" fill="#f5f5f5" />
      <g fontFamily="Liberation Sans, sans-serif" fontSize="17" fontWeight="700">
        <text x="7" y="34" fill="#d8561c">3</text>
        <text x="16" y="34" fill="#2f86d0">2</text>
        <text x="26" y="33" fill="#36a032">1</text>
      </g>
    </svg>
  );
}

function RevitIcon() {
  return (
    <svg width="40" height="40" viewBox="0 0 40 40">
      <defs>
        <linearGradient id="revit" x1="0" y1="0" x2="0" y2="1">
          <stop offset="0" stopColor="#e6eef8" />
          <stop offset=".5" stopColor="#88a8dc" />
          <stop offset="1" stopColor="#3760b4" />
        </linearGradient>
      </defs>
      <path d="M0 0h40v40H0z" fill="url(#revit)" />
      <path d="m10 8 9-5 9 8-2 8-6 3 11 7-1 5-13-9-3 8-5 2z" fill="#2b5596" />
      <path d="m15 10 8 3-7 8z" fill="#1c3d78" />
    </svg>
  );
}

function IdmIcon() {
  return (
    <svg width="42" height="40" viewBox="0 0 42 40" fill="none">
      <path d="M13 11C-3 17 0 34 12 34" stroke="#e23b2a" strokeWidth="3" />
      <path d="M14 14C2 19 3 31 16 31" stroke="#f3d62a" strokeWidth="3.500" />
      <path d="M14 17C7 22 8 29 19 28" stroke="#3cc43c" strokeWidth="3" />
      <path d="M5 33c4 4 10 4 16 0" stroke="#3a7fe0" strokeWidth="2.500" />
      <circle cx="27" cy="14" r="13" fill="#3a86d8" />
      <path d="M16 8C21-1 31 0 33 4l-3 6-8 3-1 10c-5-2-8-8-5-15z" fill="#c4c044" />
      <path d="M31 5c3 0 6 3 7 7l-5 3-4-4z" fill="#a8c455" />
      <path d="m17 18 23 6-12 5-7 9z" fill="#19c219" stroke="#0a7d0a" />
    </svg>
  );
}

function SolidWorksIcon() {
  return (
    <svg width="42" height="42" viewBox="0 0 42 42">
      <path d="M2 7 20 1l19 6v20L20 37 2 28z" fill="#5d0a0d" />
      <path d="m3 7.500 17-6 18 6-18 6z" fill="#e8242a" />
      <path d="m3 9 17 6v20L3 27z" fill="#b8161b" />
      <path d="m21 15 17-6v18l-17 8z" fill="#8a080d" />
      <g fontFamily="Liberation Sans, sans-serif" fontWeight="700" fill="#fff">
        <text x="5" y="28" fontSize="18">S</text>
        <text x="22" y="27" fontSize="15">W</text>
        <text x="17" y="39" fontSize="10" stroke="#000" strokeWidth="2" paintOrder="stroke">2016</text>
      </g>
    </svg>
  );
}

function WordIcon() {
  return (
    <svg width="40" height="42" viewBox="0 0 40 42">
      <defs>
        <linearGradient id="word" x1="0" y1="0" x2="1" y2="1">
          <stop offset="0" stopColor="#e3eefa" />
          <stop offset="1" stopColor="#8fb6e4" />
        </linearGradient>
      </defs>
      <path d="M8 2h30v37H2V8z" fill="url(#word)" stroke="#3f78bd" />
      <path d="M4 30h32v7H4z" fill="#fff" />
      <text x="5" y="28" fontSize="26" fontWeight="700" fill="#1c5cab" fontFamily="Liberation Sans, sans-serif">
        W
      </text>
      <path d="m28 21 10 4-4 14-10-5z" fill="#fff" stroke="#9db8dc" />
    </svg>
  );
}

const tasks: { label: string; icon: ReactNode; state?: "open" | "active"; stacked?: boolean }[] = [
  { label: "Windows Explorer", icon: <FolderIcon />, state: "open", stacked: true },
  { label: "Internet Explorer", icon: <IeIcon /> },
  { label: "Media Player", icon: <MediaPlayerIcon /> },
  { label: "Chrome", icon: <ChromeIcon /> },
  { label: "Calculator", icon: <CalculatorIcon />, state: "open" },
  { label: "Firefox", icon: <FirefoxIcon />, state: "open" },
  { label: "Turbine", icon: <TurbineIcon /> },
  { label: "Media Player Classic", icon: <ClapperIcon /> },
  { label: "Revit", icon: <RevitIcon /> },
  { label: "Download Manager", icon: <IdmIcon />, state: "open" },
  { label: "SolidWorks 2016", icon: <SolidWorksIcon /> },
  { label: "Word", icon: <WordIcon />, state: "open" },
  { label: "SolidWorks", icon: <SolidWorksIcon />, state: "active", stacked: true },
];

function Taskbar() {
  return (
    <nav className="flex h-[48px] items-center overflow-hidden border-t border-[#5b6b78] bg-[#080d15] pl-[10px] text-white">
      <button aria-label="Start" className="mr-[16px]">
        <StartOrb />
      </button>
      <div className="flex gap-1">
        {tasks.map((task) => (
          <div key={task.label} className="flex h-[46px] w-[66px] gap-[2px]">
            <button
              aria-label={task.label}
              className={clsx(
                "flex min-w-0 flex-1 items-center justify-center rounded-[3px] border",
                !task.state && "border-transparent",
                task.state === "open" &&
                  "border-[#83888c] bg-linear-to-br from-[#7d8184] via-[#303539] to-[#1a1f23]",
                task.state === "active" &&
                  "border-[#e4e8e8] bg-linear-to-r from-[#c2ecc3] via-[#8fce92] via-55% to-[#85898c] to-62%"
              )}
            >
              {task.icon}
            </button>
            {task.stacked && (
              <>
                <i className="w-[2px] rounded-r-[2px] border-r border-[#8a8f93] bg-[#3c4145]" />
                <i className="w-[2px] rounded-r-[2px] border-r border-[#6a6f73] bg-[#24292d]" />
              </>
            )}
          </div>
        ))}
      </div>
      <div className="ml-auto flex items-center">
        <span className="mr-[22px] pb-1 text-[14px]">EN</span>
        <button aria-label="Show hidden icons" className="mr-[19px]">
          <Arrow className="w-[9px] rotate-180" />
        </button>
        <button aria-label="Action Center" className="mr-[11px]">
          <svg width="19" height="20" fill="none">
            <path d="M1.500 1v18" stroke="#fff" strokeWidth="1.500" />
            <path d="M3 2h8v3h6v6H3z" fill="#f4f4f4" />
            <circle cx="13" cy="14" r="5.500" fill="#d3251f" />
            <path d="m10.500 11.500 5 5m0-5-5 5" stroke="#fff" strokeWidth="1.700" />
          </svg>
        </button>
        <button aria-label="Network" className="mr-[11px]">
          <svg width="19" height="20" fill="none">
            <path d="M6 4.500h12v10H4" fill="#222" stroke="#fff" strokeWidth="1.500" />
            <path d="M1 2h5v6H1zM3.500 8v11M7 18h9M11 15v3" stroke="#fff" strokeWidth="1.500" />
          </svg>
        </button>
        <button aria-label="Volume" className="mr-[18px]">
          <svg width="19" height="20" fill="none">
            <path d="M1 6h3l5-5v18l-5-5H1z" fill="#fff" />
            <path d="M12 7c1.500 2 1.500 4 0 6M15 5c2.500 3 2.500 7 0 10" stroke="#ccc" strokeWidth="1.300" />
          </svg>
        </button>
        <div className="flex w-[71px] flex-col items-end pr-px text-[14px] leading-[22px] whitespace-nowrap">
          <span className="text-[13px]">09:55 ص</span>
          <span className="font-['DejaVu_Sans']">٢٠١٨/٠٥/١</span>
        </div>
      </div>
    </nav>
  );
}

export default function App() {
  return (
    <div className="min-h-screen overflow-hidden bg-white pl-9 font-['Noto_Sans',sans-serif] text-black">
      <Ribbon />
      <section className="relative overflow-hidden">
        <GraphicsArea />
        <div className="relative flex h-[29px]">
          <CommandTabs />
          <div className="flex min-w-0 flex-1 border-t border-[#808080] pl-[154px]">
            <HeadsUpToolbar />
            <WindowButtons />
          </div>
        </div>
        <div className="relative flex h-[565px]">
          <PropertyManager />
          <Viewport />
        </div>
      </section>
      <section className="border-l-2 border-[#9db8bf] bg-[#f7f7f7]">
        <MotionToolbar />
        <div className="flex pl-[2px]">
          <MotionTree />
          <div className="w-[3px] shrink-0 border-x border-[#4a5478] bg-white" />
          <Timeline />
        </div>
        <StudyTabs />
      </section>
      <div className="bg-[#f7f7f7]">
        <StatusBar />
      </div>
      <Taskbar />
    </div>
  );
}
